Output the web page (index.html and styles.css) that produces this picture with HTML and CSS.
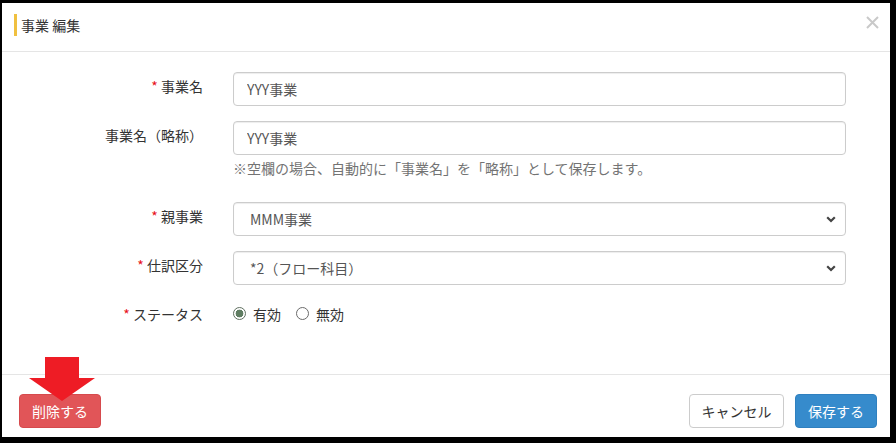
FILE: index.html
```html
<!DOCTYPE html>
<html lang="ja">
<head>
<meta charset="utf-8">
<title>事業 編集</title>
<link rel="stylesheet" href="styles.css">
</head>
<body>
<div class="frame">
  <div class="modal">
    <div class="modal-header">
      <h4 class="modal-title">事業 編集</h4>
      <button class="close" type="button" aria-label="close">
        <svg width="13" height="13" viewBox="0 0 13 13"><path d="M1 1 L12 12 M12 1 L1 12" stroke="#c9c9c9" stroke-width="2" fill="none"/></svg>
      </button>
    </div>
    <div class="modal-body">
      <div class="form-row">
        <label class="control-label"><span class="req">*</span> 事業名</label>
        <div class="control"><input class="form-control" type="text" value="YYY事業"></div>
      </div>
      <div class="form-row">
        <label class="control-label">事業名（略称）</label>
        <div class="control">
          <input class="form-control" type="text" value="YYY事業">
          <p class="help-block">※空欄の場合、自動的に「事業名」を「略称」として保存します。</p>
        </div>
      </div>
      <div class="form-row">
        <label class="control-label"><span class="req">*</span> 親事業</label>
        <div class="control">
          <div class="select-wrap">
            <select class="form-control"><option>MMM事業</option></select>
            <svg class="chev" width="10" height="7" viewBox="0 0 10 7"><path d="M1.2 1.2 L5 5 L8.8 1.2" stroke="#444" stroke-width="2.2" fill="none"/></svg>
          </div>
        </div>
      </div>
      <div class="form-row">
        <label class="control-label"><span class="req">*</span> 仕訳区分</label>
        <div class="control">
          <div class="select-wrap">
            <select class="form-control"><option>*2（フロー科目）</option></select>
            <svg class="chev" width="10" height="7" viewBox="0 0 10 7"><path d="M1.2 1.2 L5 5 L8.8 1.2" stroke="#444" stroke-width="2.2" fill="none"/></svg>
          </div>
        </div>
      </div>
      <div class="form-row">
        <label class="control-label"><span class="req">*</span> ステータス</label>
        <div class="control radios">
          <label class="radio"><input type="radio" name="status" checked> 有効</label>
          <label class="radio"><input type="radio" name="status"> 無効</label>
        </div>
      </div>
    </div>
    <div class="modal-footer">
      <button class="btn btn-danger" type="button">削除する</button>
      <div class="spacer"></div>
      <button class="btn btn-default" type="button">キャンセル</button>
      <button class="btn btn-primary" type="button">保存する</button>
    </div>
    <svg class="arrow" width="68" height="45" viewBox="0 0 68 45"><path d="M16 0 H50 V21 H66 L33 44 L0 21 H16 Z" fill="#ee1c25"/></svg>
  </div>
</div>
</body>
</html>
```
FILE: styles.css
```css
* { box-sizing: border-box; }
html, body { margin: 0; padding: 0; }
body {
  background: #000;
  font-family: "Noto Sans CJK JP", "Noto Sans", sans-serif;
  font-size: 14px;
  line-height: 20px;
  color: #333;
}
.frame {
  padding: 3px 6px 6px 2px;
  height: 443px;
}
.modal {
  position: relative;
  background: #fff;
  height: 434px;
  display: flex;
  flex-direction: column;
}
.modal-header {
  display: flex;
  align-items: flex-start;
  padding: 11px 11px 15px 12px;
  border-bottom: 1px solid #e5e5e5;
}
.modal-title {
  margin: 0;
  font-size: 14px;
  font-weight: normal;
  line-height: 22px;
  border-left: 3px solid #f0c040;
  padding-left: 4px;
  color: #333;
}
.close {
  margin-left: auto;
  margin-top: 2px;
  background: none;
  border: 0;
  padding: 0;
  width: 13px;
  height: 13px;
  display: flex;
}
.modal-body {
  flex: 1;
  padding: 20px 0 0 0;
}
.form-row {
  display: grid;
  grid-template-columns: 216px 643px;
  margin-bottom: 15px;
}
.control-label {
  text-align: right;
  padding: 4px 15px 0 0;
  color: #333;
}
.req { color: #e8101a; }
.control { padding: 0 15px; }
.form-control {
  display: block;
  width: 100%;
  height: 34px;
  padding: 6px 13px;
  font-family: inherit;
  font-size: 14px;
  line-height: 20px;
  color: #555;
  background: #fff;
  border: 1px solid #ccc;
  border-radius: 4px;
  box-shadow: inset 0 1px 1px rgba(0,0,0,.075);
}
.help-block {
  margin: 5px 0 10px;
  line-height: 17px;
  color: #737373;
}
.select-wrap { position: relative; }
select.form-control {
  appearance: none;
  -webkit-appearance: none;
  padding-left: 16px;
}
.chev {
  position: absolute;
  right: 10px;
  top: 14px;
}
.radios {
  display: flex;
  align-items: center;
  gap: 15px;
  padding-top: 3px;
  height: 24px;
}
.radio {
  display: flex;
  align-items: center;
  gap: 7px;
  color: #333;
}
.radio input {
  appearance: none;
  -webkit-appearance: none;
  margin: 0;
  width: 13px;
  height: 13px;
  border: 1px solid #6b6b6b;
  border-radius: 50%;
  background: #fff;
}
.radio input:checked {
  background: radial-gradient(circle, #5f7d62 0 3.6px, #fff 4.2px);
  border-color: #5f6f60;
}
.modal-footer {
  display: flex;
  align-items: flex-start;
  gap: 11px;
  padding: 19px 13px 0 17px;
  height: 63px;
  border-top: 1px solid #e5e5e5;
}
.spacer { flex: 1; }
.btn {
  height: 34px;
  padding: 6px 0;
  font-family: inherit;
  font-size: 14px;
  line-height: 20px;
  white-space: nowrap;
  text-align: center;
  border: 1px solid transparent;
  border-radius: 4px;
}
.btn-danger {
  width: 82px;
  background: #e15558;
  border-color: #d64a4d;
  color: #fff;
}
.btn-default {
  width: 95px;
  background: #fff;
  border-color: #ccc;
  color: #333;
}
.btn-primary {
  width: 82px;
  background: #368bcc;
  border-color: #2f80bf;
  color: #fff;
}
.arrow {
  position: absolute;
  left: 27px;
  top: 354px;
}
```
